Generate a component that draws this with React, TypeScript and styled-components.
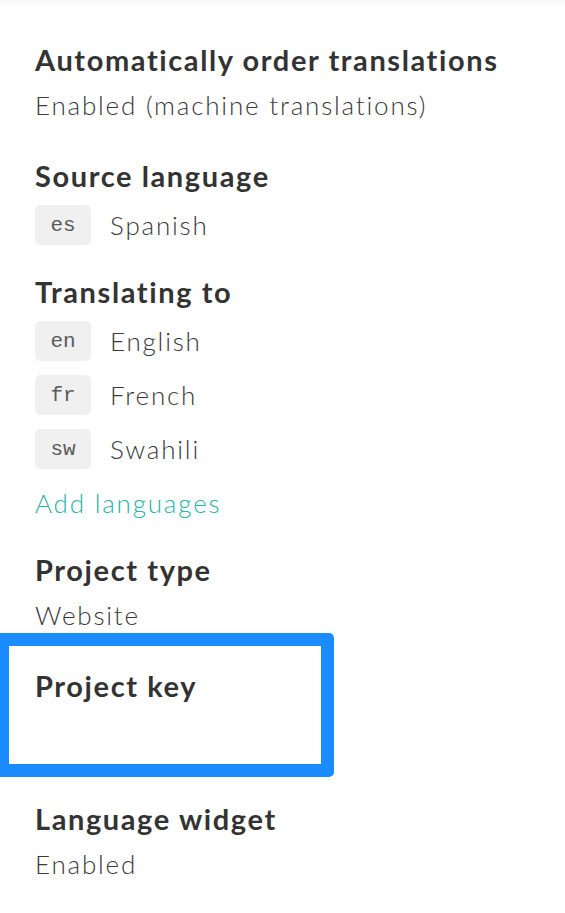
import styled, { createGlobalStyle } from "styled-components";

const GlobalStyle = createGlobalStyle`
    body {
        margin: 0;
        background: #ffffff;
        font-family: Lato, "Noto Sans", sans-serif;
        color: #333333;
    }
`

const languages = [
    { code: "en", name: "English" },
    { code: "fr", name: "French" },
    { code: "sw", name: "Swahili" },
];

const App: React.FC = () => {
    return (
        <>
            <GlobalStyle />
            <TopBand />
            <Page>
                <Section>
                    <Heading>Automatically order translations</Heading>
                    <Value>Enabled (machine translations)</Value>
                </Section>
                <Section>
                    <Heading>Source language</Heading>
                    <LangList>
                        <LangRow>
                            <CodeBadge>es</CodeBadge>
                            <LangName>Spanish</LangName>
                        </LangRow>
                    </LangList>
                </Section>
                <Section>
                    <Heading>Translating to</Heading>
                    <LangList>
                        {languages.map(lang => (
                            <LangRow key={lang.code}>
                                <CodeBadge>{lang.code}</CodeBadge>
                                <LangName>{lang.name}</LangName>
                            </LangRow>
                        ))}
                        <AddLink href="#">Add languages</AddLink>
                    </LangList>
                </Section>
                <Section>
                    <Heading>Project type</Heading>
                    <Value>Website</Value>
                </Section>
                <KeySection>
                    <Highlight />
                    <Heading>Project key</Heading>
                    <KeyValue />
                </KeySection>
                <Section>
                    <Heading>Language widget</Heading>
                    <Value>Enabled</Value>
                </Section>
            </Page>
        </>
    )
}

const TopBand = styled.div`
    height: 5px;
    background-color: #fafafa;
`

const Page = styled.div`
    display: flex;
    flex-direction: column;
    gap: 30px;
    padding: 38px 0 40px 35px;
`

const Section = styled.section`
    display: flex;
    flex-direction: column;
`

const KeySection = styled(Section)`
    position: relative;
`

// blue annotation frame drawn over the project key block
const Highlight = styled.div`
    position: absolute;
    top: -36px;
    bottom: -5px;
    left: -39px;
    width: 338px;
    box-sizing: border-box;
    border: 13px solid #1a8cff;
    border-radius: 0 5px 5px 0;
    pointer-events: none;
`

const Heading = styled.h3`
    margin: 0;
    font-size: 29px;
    line-height: 34px;
    font-weight: 700;
    letter-spacing: 1.6px;
    color: #333333;
`

const valueText = `
    font-size: 26px;
    line-height: 40px;
    font-weight: 300;
    letter-spacing: 1.8px;
`

const Value = styled.div`
    ${valueText}
    margin: 8px 0 4px;
    color: #3a3a3a;
`

const KeyValue = styled.div`
    margin-top: 8px;
    min-height: 61px;
`

const LangList = styled.div`
    display: flex;
    flex-direction: column;
    gap: 14px;
    margin-top: 12px;
`

const LangRow = styled.div`
    display: flex;
    align-items: center;
    gap: 19px;
    height: 40px;
`

const CodeBadge = styled.span`
    display: flex;
    align-items: center;
    justify-content: center;
    width: 56px;
    height: 40px;
    border-radius: 5px;
    background-color: #f0f0f0;
    font-family: "Liberation Mono", "DejaVu Sans Mono", monospace;
    font-size: 21px;
    color: #5a5a5a;
`

const LangName = styled.span`
    ${valueText}
    color: #3a3a3a;
`

const AddLink = styled.a`
    ${valueText}
    color: #2ab3a6;
    text-decoration: none;
`

export default App;
